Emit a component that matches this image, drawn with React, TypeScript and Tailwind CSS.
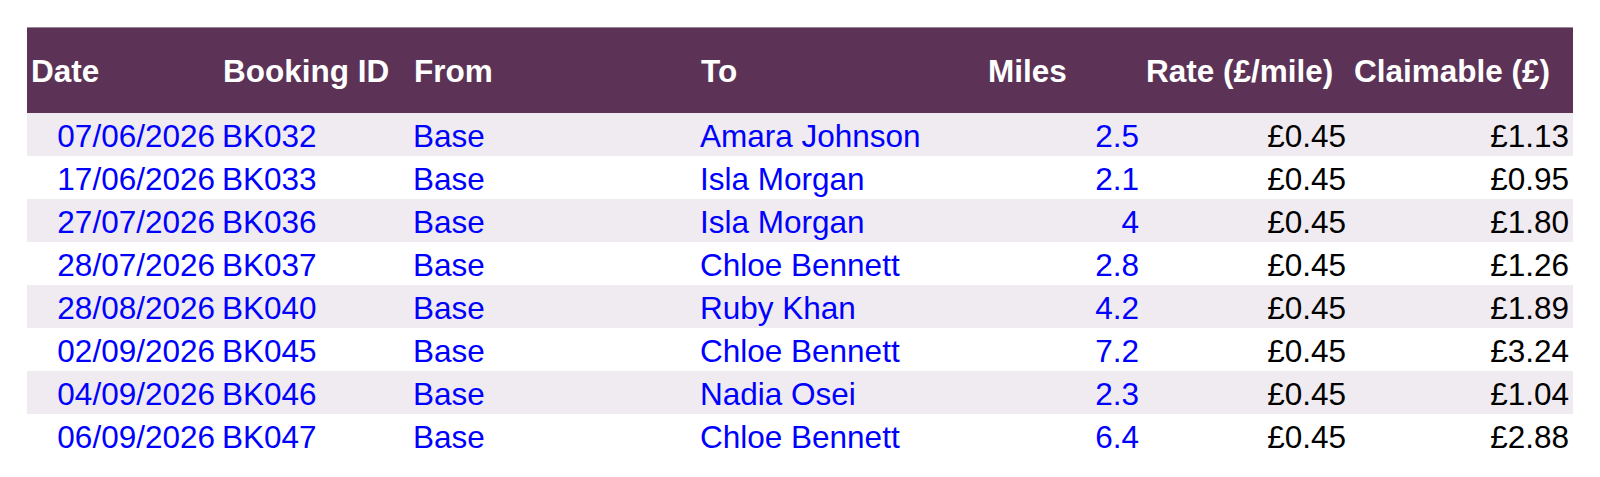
const rows = [
  ["07/06/2026", "BK032", "Base", "Amara Johnson", "2.5", "£0.45", "£1.13"],
  ["17/06/2026", "BK033", "Base", "Isla Morgan", "2.1", "£0.45", "£0.95"],
  ["27/07/2026", "BK036", "Base", "Isla Morgan", "4", "£0.45", "£1.80"],
  ["28/07/2026", "BK037", "Base", "Chloe Bennett", "2.8", "£0.45", "£1.26"],
  ["28/08/2026", "BK040", "Base", "Ruby Khan", "4.2", "£0.45", "£1.89"],
  ["02/09/2026", "BK045", "Base", "Chloe Bennett", "7.2", "£0.45", "£3.24"],
  ["04/09/2026", "BK046", "Base", "Nadia Osei", "2.3", "£0.45", "£1.04"],
  ["06/09/2026", "BK047", "Base", "Chloe Bennett", "6.4", "£0.45", "£2.88"],
];

const headers = ["Date", "Booking ID", "From", "To", "Miles", "Rate (£/mile)", "Claimable (£)"];

const cols = "grid grid-cols-[192px_191px_287px_287px_158px_208px_223px]";

export default function App() {
  return (
    <div
      className="min-h-[477px] bg-white pt-[27px] pl-[27px]"
      style={{ fontFamily: '"Liberation Sans", Arial, sans-serif' }}
    >
      <div className="w-[1546px] text-[31.5px]">
        <div className={`${cols} h-[86px] items-center bg-[#5c3357] border-t border-[#9c8499] text-white font-bold`}>
          {headers.map((h) => (
            <div key={h} className="pl-[4px] pt-[2px] whitespace-nowrap">
              {h}
            </div>
          ))}
        </div>

        {rows.map((r, i) => (
          <div
            key={r[1]}
            className={`${cols} h-[43px] items-end pb-[2px] whitespace-nowrap ${i % 2 === 0 ? "bg-[#f0ebf0]" : "bg-white"}`}
          >
            <div className="text-right pr-[4px] text-[#0000ff]">{r[0]}</div>
            <div className="pl-[3px] text-[#0000ff]">{r[1]}</div>
            <div className="pl-[3px] text-[#0000ff]">{r[2]}</div>
            <div className="pl-[3px] text-[#0000ff]">{r[3]}</div>
            <div className="text-right pr-[3px] text-[#0000ff]">{r[4]}</div>
            <div className="text-right pr-[4px] text-black">{r[5]}</div>
            <div className="text-right pr-[4px] text-black">{r[6]}</div>
          </div>
        ))}
      </div>
    </div>
  );
}
